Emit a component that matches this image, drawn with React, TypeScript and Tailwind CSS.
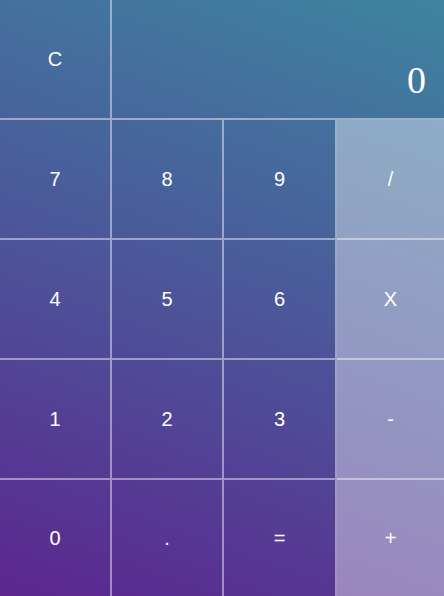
import React from "react";

const Cell = ({ label, right = false, bottom = false, op = false }: { label: string; right?: boolean; bottom?: boolean; op?: boolean }) => (
  <div
    className={
      "flex items-center justify-center text-white text-[20px] font-['Liberation_Sans',Arial,sans-serif] border-white/45 " +
      (right ? "" : "border-r-2 ") +
      (bottom ? "" : "border-b-2 ") +
      (op ? "bg-white/40" : "")
    }
  >
    {label}
  </div>
);

export default function App() {
  const rows = [
    ["7", "8", "9", "/"],
    ["4", "5", "6", "X"],
    ["1", "2", "3", "-"],
    ["0", ".", "=", "+"],
  ];
  return (
    <div className="w-full h-screen bg-[linear-gradient(200deg,#3e84a0_0%,#4a5b9a_45%,#5c2690_100%)] grid grid-cols-[112px_112px_113px_1fr] grid-rows-[120px_120px_120px_120px_1fr]">
      <Cell label="C" />
      <div className="col-span-3 border-b-2 border-white/45 flex items-end justify-end pr-[18px] pb-[19px] text-white text-[38px] leading-none font-['Liberation_Serif','Times_New_Roman',serif]">
        0
      </div>
      {rows.map((r, ri) =>
        r.map((l, ci) => (
          <Cell key={ri + "-" + ci} label={l} right={ci === 3} bottom={ri === 3} op={ci === 3} />
        ))
      )}
    </div>
  );
}
